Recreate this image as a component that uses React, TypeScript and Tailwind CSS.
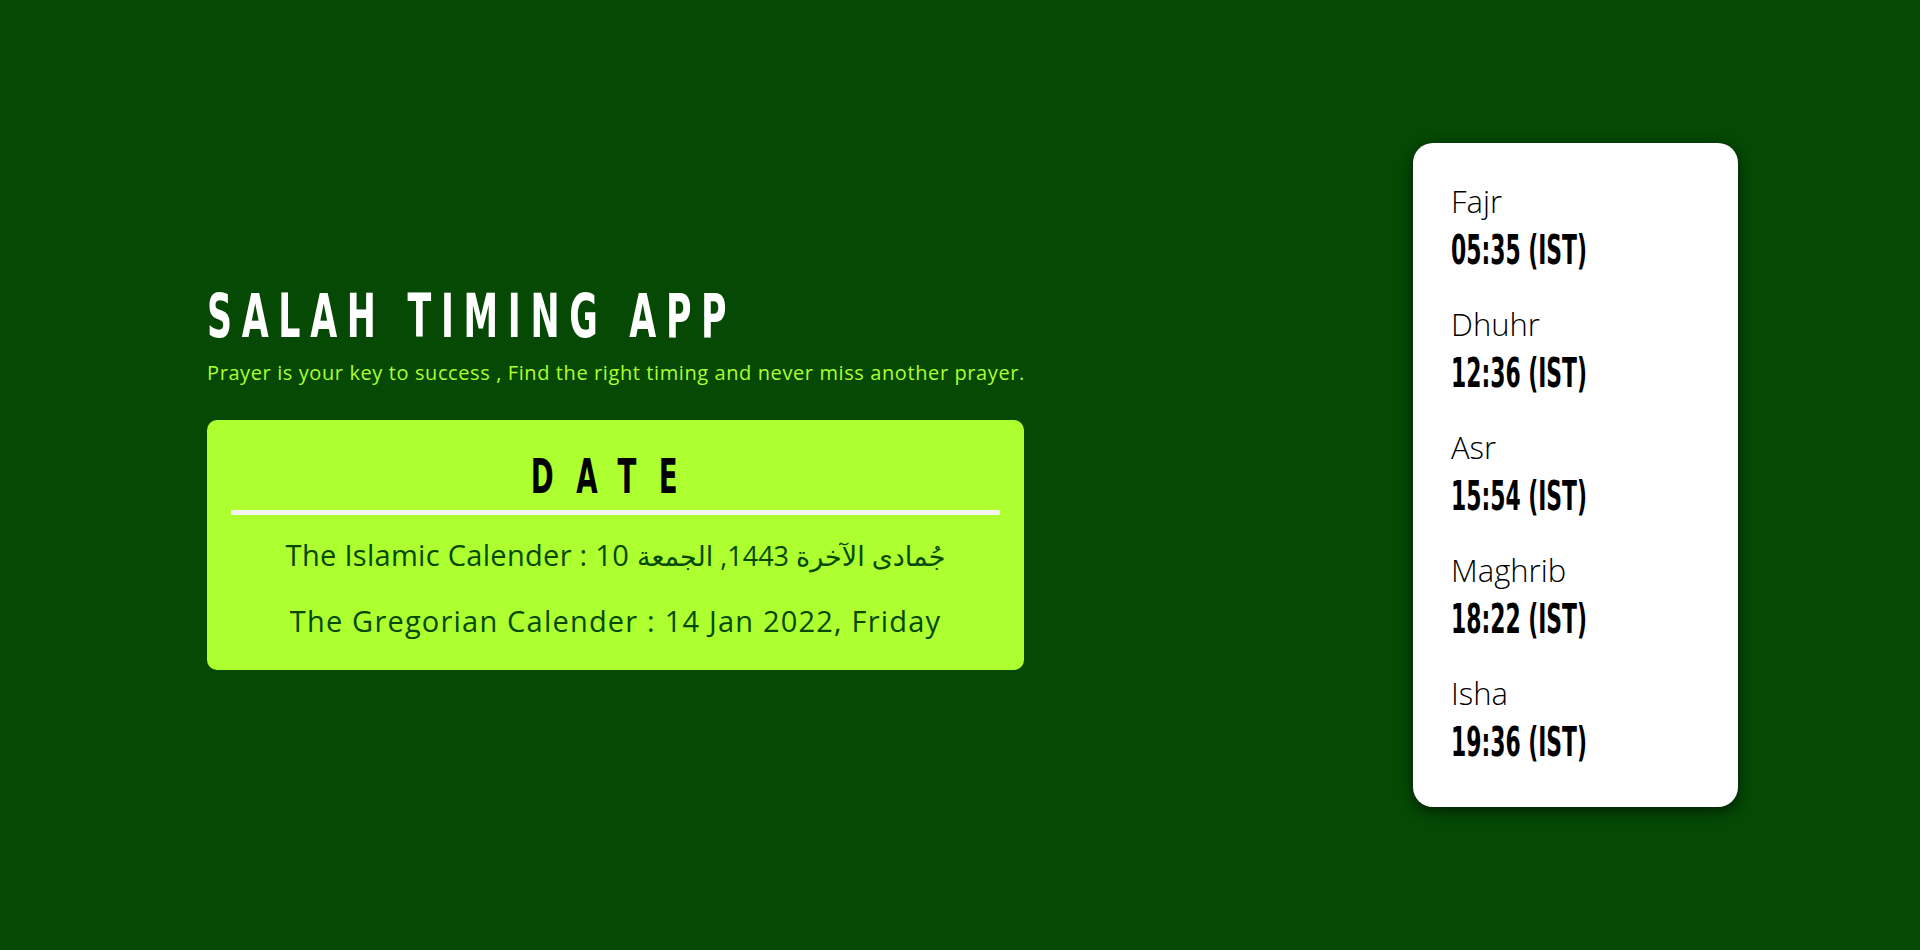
import React from 'react'

const narrow = "font-['DejaVu_Sans_Condensed','DejaVu_Sans',sans-serif] font-bold"
const body = "font-['Open_Sans','DejaVu_Sans',sans-serif]"

const prayers = [
    { name: 'Fajr', time: '05:35 (IST)' },
    { name: 'Dhuhr', time: '12:36 (IST)' },
    { name: 'Asr', time: '15:54 (IST)' },
    { name: 'Maghrib', time: '18:22 (IST)' },
    { name: 'Isha', time: '19:36 (IST)' },
]

const App = () => {
    return (
        <div className="w-full h-[950px] bg-[#054905] flex items-center justify-between pl-[207px] pr-[182px]">
            {/* left side */}
            <div className="w-[817px] mt-[6px]">
                <h1 className={`${narrow} text-white text-[60px] leading-none tracking-[15px] origin-left scale-x-[0.645] whitespace-nowrap`}>
                    SALAH TIMING APP
                </h1>
                <p className={`${body} mt-[15px] text-[20px] leading-[24px] tracking-[0.6px] text-[#adff2f] whitespace-nowrap`}>
                    Prayer is your key to success , Find the right timing and never miss another prayer.
                </p>
                <div className="mt-[35px] bg-[#adff2f] rounded-[10px] px-[24px] pt-[32px] pb-[29px]">
                    <h2 className={`${narrow} text-black text-[48px] leading-none tracking-[35px] text-center scale-x-[0.64]`}>
                        DATE
                    </h2>
                    <div className="mt-[10px] h-[5px] bg-[#f5f5f5]"></div>
                    <p className={`${body} mt-[20px] text-[29px] leading-[40px] tracking-[0.3px] text-[#054905] text-center`}>
                        The Islamic Calender : 10 <span className="tracking-normal text-[27px]">جُمادى الآخرة 1443, الجمعة</span>
                    </p>
                    <p className={`${body} mt-[25px] text-[29px] leading-[40px] tracking-[1.2px] text-[#054905] text-center`}>
                        The Gregorian Calender : 14 Jan 2022, Friday
                    </p>
                </div>
            </div>

            {/* timings card */}
            <div className="w-[325px] bg-white rounded-[20px] shadow-[0_4px_14px_rgba(0,0,0,0.6)] pl-[38px] pt-[40px] pb-[44px] flex flex-col gap-[35px]">
                {prayers.map((p) => (
                    <div key={p.name}>
                        <div className={`${body} font-light text-[31px] leading-[36px] text-black`}>{p.name}</div>
                        <div className={`${narrow} mt-[10px] text-[41px] leading-[42px] text-black origin-left scale-x-[0.593] whitespace-nowrap`}>
                            {p.time}
                        </div>
                    </div>
                ))}
            </div>
        </div>
    )
}

export default App
